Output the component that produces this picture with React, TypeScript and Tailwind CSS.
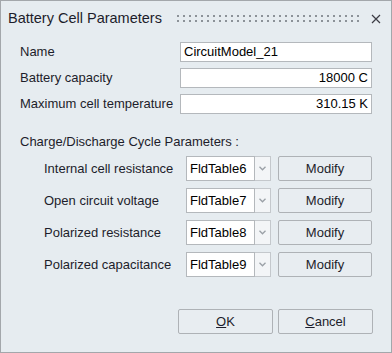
import React from "react";

const font = { fontFamily: '"Liberation Sans", Arial, sans-serif' };

const Grip = () => (
  <svg width="186" height="8" viewBox="0 0 186 8">
    {Array.from({ length: 31 }).map((_, i) => (
      <g key={i} fill="#8c9298">
        <rect x={i * 6} y={0} width="2" height="2" />
        <rect x={i * 6} y={5} width="2" height="2" />
      </g>
    ))}
  </svg>
);

const Close = () => (
  <svg width="10" height="10" viewBox="0 0 10 10">
    <path d="M1 1 L9 9 M9 1 L1 9" stroke="#3c3c44" strokeWidth="1.2" fill="none" />
  </svg>
);

const Field = ({ label, value, right }: { label: string; value: string; right?: boolean }) => (
  <div className="flex items-center h-[20px]">
    <div className="w-[160px] text-[13px] text-[#1d1d2b] whitespace-nowrap">{label}</div>
    <div
      className={`w-[192px] h-[20px] bg-white border border-[#b4b8bc] flex items-center px-[3px] text-[13px] text-black ${
        right ? "justify-end" : ""
      }`}
    >
      {value}
    </div>
  </div>
);

const CycleRow = ({ label, table }: { label: string; table: string }) => (
  <div className="flex items-center h-[25px]">
    <div className="w-[166px] pl-[24px] text-[13px] text-[#1d1d2b] shrink-0 whitespace-nowrap">{label}</div>
    <div className="flex h-[25px] w-[85px]">
      <div className="flex-1 bg-white border border-[#b4b8bc] flex items-center pl-[3px] text-[13px] text-black">
        {table}
      </div>
      <div className="w-[16px] bg-[#f3f5f7] border border-l-0 border-[#c4c8cc] flex items-center justify-center">
        <svg width="7" height="5" viewBox="0 0 7 5">
          <path d="M0.5 0.8 L3.5 3.8 L6.5 0.8" stroke="#9aa0a6" strokeWidth="1.3" fill="none" />
        </svg>
      </div>
    </div>
    <button className="ml-[7px] w-[94px] h-[25px] border border-[#aeb2b6] rounded-[2px] bg-[#e8edf1] text-[13px] text-[#1d1d2b]">
      Modify
    </button>
  </div>
);

export default function App() {
  return (
    <div style={font} className="w-[392px] h-[353px] border border-[#a3a7ab] bg-[#e6ecf0] flex flex-col">
      <div className="h-[36px] flex items-center pl-[7px] pr-[10px]">
        <span className="text-[14.5px] text-[#1d1d2b]">Battery Cell Parameters</span>
        <div className="ml-[15px] flex items-center">
          <Grip />
        </div>
        <div className="ml-auto flex items-center">
          <Close />
        </div>
      </div>

      <div className="flex flex-col pl-[19px] pr-[18px] mt-[5px] gap-[6px]">
        <Field label="Name" value="CircuitModel_21" />
        <Field label="Battery capacity" value="18000 C" right />
        <Field label="Maximum cell temperature" value="310.15 K" right />
      </div>

      <div className="pl-[19px] mt-[20px] h-[16px] flex items-center text-[13px] text-[#1d1d2b]">
        Charge/Discharge Cycle Parameters :
      </div>

      <div className="flex flex-col pl-[19px] mt-[6px] gap-[7px]">
        <CycleRow label="Internal cell resistance" table="FldTable6" />
        <CycleRow label="Open circuit voltage" table="FldTable7" />
        <CycleRow label="Polarized resistance" table="FldTable8" />
        <CycleRow label="Polarized capacitance" table="FldTable9" />
      </div>

      <div className="flex pl-[177px] mt-[32px] gap-[5px]">
        <button className="w-[95px] h-[25px] border border-[#aeb2b6] rounded-[2px] bg-[#e8edf1] text-[13px] text-[#1d1d2b]">
          <span className="underline">O</span>K
        </button>
        <button className="w-[95px] h-[25px] border border-[#aeb2b6] rounded-[2px] bg-[#e8edf1] text-[13px] text-[#1d1d2b]">
          <span className="underline">C</span>ancel
        </button>
      </div>
    </div>
  );
}
